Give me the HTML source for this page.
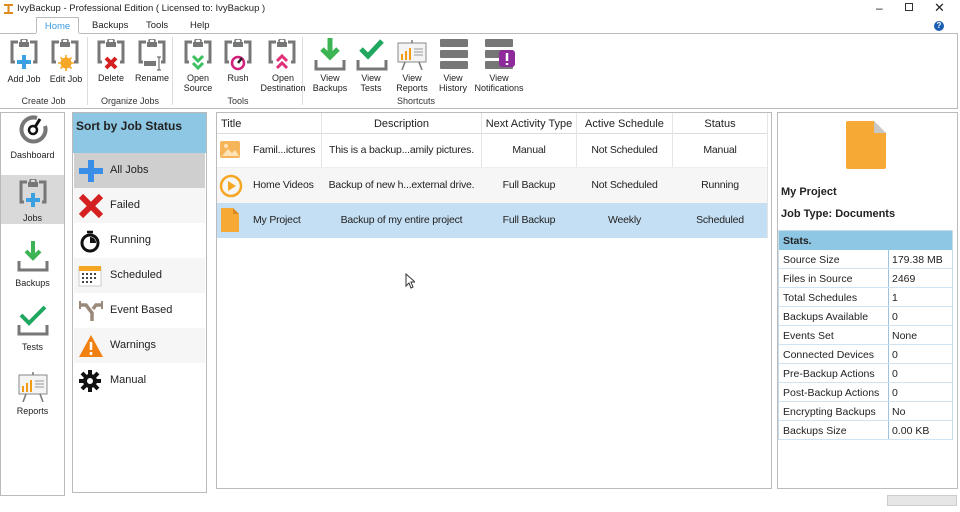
<!DOCTYPE html>
<html><head><meta charset="utf-8"><style>
*{margin:0;padding:0;box-sizing:border-box}
body{width:960px;height:512px;background:#fff;font-family:"Liberation Sans",sans-serif;font-size:11px;color:#222;position:relative;overflow:hidden;white-space:nowrap}
.a{position:absolute}
.lbl{position:absolute;text-align:center;font-size:9px;line-height:10px;color:#222}
.grp{position:absolute;top:96px;font-size:9px;color:#333;text-align:center}
.sep{position:absolute;top:37px;width:1px;height:68px;background:#ddd}
.cat{position:absolute;left:74px;width:131px;height:35px;font-size:11px}
.cat span{position:absolute;left:36px;top:11px}
.cat svg{position:absolute;left:4px;top:6px}
.row{position:absolute;left:217px;width:550px;height:35px;font-size:10.5px;letter-spacing:-0.2px}
.row div{position:absolute;top:11px;text-align:center}
.st{position:absolute;left:779px;width:173px;height:19px;border-bottom:1px solid #cfe3f2;font-size:10.5px}
.st b{font-weight:normal;position:absolute;left:4px;top:4px}
.st i{font-style:normal;position:absolute;left:113px;top:4px}
.nav{position:absolute;left:1px;width:63px;text-align:center;font-size:9px}
</style></head><body>
<svg width="0" height="0" style="position:absolute"><defs>
<g id="clip"><path d="M3 9V3h6M21 3h6v6" fill="none" stroke="#777" stroke-width="3"/><path d="M3 9v14h3M27 9v14h-3" fill="none" stroke="#777" stroke-width="3"/><rect x="10" y="3" width="10" height="5" fill="#777"/><rect x="12" y="0" width="6" height="4" rx="2" fill="none" stroke="#777" stroke-width="1.6"/></g>
</defs></svg>

<svg class="a" style="left:3px;top:3px" width="11" height="11"><rect x="0" y="0" width="11" height="11" fill="#fff"/><path d="M1 2h9M5.5 2v8M1 10h9" stroke="#e08a1e" stroke-width="2"/></svg>
<div class="a" style="left:17px;top:3px;font-size:9.5px">IvyBackup - Professional Edition ( Licensed to: IvyBackup )</div>
<div class="a" style="left:876px;top:1px;font-size:12px">&#8211;</div>
<div class="a" style="left:905px;top:3px;width:8px;height:8px;border:1px solid #333"></div>
<div class="a" style="left:934px;top:0px;font-size:13px">&#10005;</div>
<div class="a" style="left:36px;top:17px;width:43px;height:17px;border:1px solid #bbb;border-bottom:none;background:#fff;color:#3a9be0;font-size:9.5px;text-align:center;padding-top:3px">Home</div>
<div class="a" style="left:92px;top:20px;font-size:9.5px">Backups</div>
<div class="a" style="left:146px;top:20px;font-size:9.5px">Tools</div>
<div class="a" style="left:190px;top:20px;font-size:9.5px">Help</div>
<div class="a" style="left:934px;top:21px;width:10px;height:10px;border-radius:50%;background:#1a5fb4;color:#fff;font-size:8px;text-align:center;font-weight:bold;line-height:10px">?</div>
<div class="a" style="left:0;top:33px;width:958px;height:76px;border:1px solid #bbb;border-left:none"></div>
<div class="a" style="left:36px;top:33px;width:43px;height:1px;background:#fff"></div>
<div class="sep" style="left:87px"></div><div class="sep" style="left:172px"></div><div class="sep" style="left:302px"></div>

<svg class="a" style="left:9px;top:39px" width="30" height="32"><use href="#clip"/><path d="M15 16v14M8 23h14" stroke="#3aa0e0" stroke-width="4"/></svg>
<svg class="a" style="left:50px;top:39px" width="30" height="32"><use href="#clip"/><circle cx="16" cy="24" r="4" fill="none" stroke="#f5a623" stroke-width="3"/><path d="M16 16v16M8 24h16M10.5 18.5l11 11M21.5 18.5l-11 11" stroke="#f5a623" stroke-width="1.6"/></svg>
<svg class="a" style="left:96px;top:39px" width="30" height="32"><use href="#clip"/><path d="M10 19l10 10M20 19l-10 10" stroke="#d42020" stroke-width="4"/></svg>
<svg class="a" style="left:137px;top:39px" width="30" height="32"><use href="#clip"/><rect x="7" y="22" width="12" height="5" fill="#777"/><path d="M22 18v13M20 18h4M20 31h4" stroke="#555" stroke-width="1"/></svg>
<svg class="a" style="left:183px;top:39px" width="30" height="32"><use href="#clip"/><path d="M10 17l5 5 5-5M10 24l5 5 5-5" fill="none" stroke="#3cc060" stroke-width="3"/></svg>
<svg class="a" style="left:223px;top:39px" width="30" height="32"><use href="#clip"/><circle cx="15" cy="24" r="6" fill="none" stroke="#d0207a" stroke-width="2.5"/><path d="M15 24l4-5" stroke="#222" stroke-width="2.5"/></svg>
<svg class="a" style="left:267px;top:39px" width="30" height="32"><use href="#clip"/><path d="M10 22l5-5 5 5M10 29l5-5 5 5" fill="none" stroke="#e0307a" stroke-width="3"/></svg>
<svg class="a" style="left:314px;top:38px" width="32" height="34"><path d="M16 0v18M8 11l8 8 8-8" fill="none" stroke="#3cb454" stroke-width="5"/><path d="M2 22v9h28v-9" fill="none" stroke="#777" stroke-width="3"/></svg>
<svg class="a" style="left:356px;top:38px" width="32" height="34"><path d="M5 11l7 7 14-15" fill="none" stroke="#20a860" stroke-width="5"/><path d="M2 22v9h28v-9" fill="none" stroke="#777" stroke-width="3"/></svg>
<svg class="a" style="left:397px;top:40px" width="30" height="30"><rect x="1" y="3" width="28" height="19" fill="#f4f4f4" stroke="#888"/><rect x="4" y="14" width="2" height="6" fill="#f39c12"/><rect x="8" y="11" width="2" height="9" fill="#f39c12"/><rect x="12" y="8" width="2" height="12" fill="#f39c12"/><path d="M17 9h9M17 12h9M17 15h9" stroke="#999"/><path d="M8 22l-3 8M22 22l3 8M15 0v3" stroke="#777" stroke-width="1.5"/></svg>
<svg class="a" style="left:440px;top:39px" width="28" height="32"><rect x="0" y="0" width="28" height="8" rx="1" fill="#777"/><rect x="0" y="11" width="28" height="8" rx="1" fill="#777"/><rect x="0" y="22" width="28" height="8" rx="1" fill="#777"/></svg>
<svg class="a" style="left:485px;top:39px" width="30" height="32"><rect x="0" y="0" width="28" height="8" rx="1" fill="#777"/><rect x="0" y="11" width="28" height="8" rx="1" fill="#777"/><rect x="0" y="22" width="28" height="8" rx="1" fill="#777"/><rect x="14" y="11" width="16" height="17" rx="3" fill="#8e2a9a"/><path d="M22 14v8M22 24v2" stroke="#fff" stroke-width="2.5"/></svg>

<div class="lbl" style="left:4px;top:74px;width:40px">Add Job</div>
<div class="lbl" style="left:46px;top:74px;width:40px">Edit Job</div>
<div class="lbl" style="left:91px;top:73px;width:40px">Delete</div>
<div class="lbl" style="left:132px;top:73px;width:40px">Rename</div>
<div class="lbl" style="left:176px;top:73px;width:44px">Open<br>Source</div>
<div class="lbl" style="left:218px;top:73px;width:40px">Rush</div>
<div class="lbl" style="left:258px;top:73px;width:50px">Open<br>Destination</div>
<div class="lbl" style="left:307px;top:73px;width:46px">View<br>Backups</div>
<div class="lbl" style="left:351px;top:73px;width:40px">View<br>Tests</div>
<div class="lbl" style="left:392px;top:73px;width:40px">View<br>Reports</div>
<div class="lbl" style="left:433px;top:73px;width:40px">View<br>History</div>
<div class="lbl" style="left:470px;top:73px;width:58px">View<br>Notifications</div>
<div class="grp" style="left:0;width:87px">Create Job</div>
<div class="grp" style="left:88px;width:84px">Organize Jobs</div>
<div class="grp" style="left:173px;width:130px">Tools</div>
<div class="grp" style="left:303px;width:226px">Shortcuts</div>

<div class="a" style="left:0;top:112px;width:65px;height:384px;border:1px solid #bbb"></div>
<svg class="a" style="left:17px;top:114px" width="32" height="32"><path d="M20 4A12 12 0 1 0 28 12" fill="none" stroke="#777" stroke-width="4"/><circle cx="16" cy="16" r="4" fill="none" stroke="#111" stroke-width="2.5"/><path d="M18 13l5-8" stroke="#111" stroke-width="3"/></svg>
<div class="nav" style="top:150px">Dashboard</div>
<div class="a" style="left:1px;top:175px;width:63px;height:49px;background:#d9d9d9"></div>
<svg class="a" style="left:18px;top:179px" width="30" height="32"><use href="#clip"/><path d="M15 14v14M8 21h14" stroke="#3aa0e0" stroke-width="4"/></svg>
<div class="nav" style="top:213px">Jobs</div>
<svg class="a" style="left:17px;top:241px" width="32" height="32"><path d="M16 0v16M9 10l7 7 7-7" fill="none" stroke="#3cb454" stroke-width="4"/><path d="M2 20v9h28v-9" fill="none" stroke="#777" stroke-width="3"/></svg>
<div class="nav" style="top:278px">Backups</div>
<svg class="a" style="left:17px;top:305px" width="32" height="32"><path d="M4 10l8 8 16-16" fill="none" stroke="#20a860" stroke-width="4"/><path d="M2 20v9h28v-9" fill="none" stroke="#777" stroke-width="3"/></svg>
<div class="nav" style="top:342px">Tests</div>
<svg class="a" style="left:18px;top:372px" width="30" height="30"><rect x="1" y="3" width="28" height="19" fill="#f4f4f4" stroke="#888"/><rect x="4" y="14" width="2" height="6" fill="#f39c12"/><rect x="8" y="11" width="2" height="9" fill="#f39c12"/><rect x="12" y="8" width="2" height="12" fill="#f39c12"/><path d="M17 9h9M17 12h9M17 15h9" stroke="#999"/><path d="M8 22l-3 8M22 22l3 8M15 0v3" stroke="#777" stroke-width="1.5"/></svg>
<div class="nav" style="top:406px">Reports</div>

<div class="a" style="left:72px;top:112px;width:135px;height:381px;border:1px solid #bbb"></div>
<div class="a" style="left:73px;top:113px;width:133px;height:40px;background:#8ec7e4;font-weight:bold;font-size:12px;padding:6px 3px">Sort by Job Status</div>
<div class="cat" style="top:153px;background:#cfcfcf"><svg width="26" height="24"><path d="M13 1v22M1 12h24" stroke="#3a8ee8" stroke-width="6"/></svg><span>All Jobs</span></div>
<div class="cat" style="top:188px;background:#f6f6f6"><svg width="26" height="24"><path d="M3 2l20 20M23 2L3 22" stroke="#d42020" stroke-width="6"/></svg><span>Failed</span></div>
<div class="cat" style="top:223px"><svg width="26" height="24"><circle cx="12" cy="14" r="8" fill="none" stroke="#111" stroke-width="3"/><path d="M12 14V8A6 6 0 0 1 18 14z" fill="#111"/><path d="M9 3h6" stroke="#111" stroke-width="2.5"/></svg><span>Running</span></div>
<div class="cat" style="top:258px;background:#f6f6f6"><svg width="26" height="24"><rect x="1" y="3" width="22" height="19" fill="#fff" stroke="#ccc"/><rect x="1" y="2" width="22" height="5" fill="#f5a623"/><path d="M4 10h2M8 10h2M12 10h2M16 10h2M4 14h2M8 14h2M12 14h2M16 14h2M4 18h2M8 18h2M12 18h2" stroke="#444" stroke-width="2"/></svg><span>Scheduled</span></div>
<div class="cat" style="top:293px"><svg width="26" height="24"><path d="M2 6h6l6 8v8M24 6h-6l-3 4" fill="none" stroke="#9a8878" stroke-width="3.5"/><path d="M2 2v8M24 2v8" stroke="#9a8878" stroke-width="2"/></svg><span>Event Based</span></div>
<div class="cat" style="top:328px;background:#f6f6f6"><svg width="26" height="24"><path d="M13 1L25 23H1z" fill="#f08010"/><path d="M13 8v8M13 18v3" stroke="#fff" stroke-width="2.5"/></svg><span>Warnings</span></div>
<div class="cat" style="top:363px"><svg width="26" height="24"><circle cx="12" cy="12" r="7" fill="#111"/><path d="M12 1v22M1 12h22M4 4l16 16M20 4L4 20" stroke="#111" stroke-width="4"/><circle cx="12" cy="12" r="3" fill="#fff"/></svg><span>Manual</span></div>

<div class="a" style="left:216px;top:112px;width:556px;height:377px;border:1px solid #bbb"></div>
<div class="a" style="left:217px;top:113px;width:550px;height:21px;border-bottom:1px solid #ddd"></div>
<div class="a" style="left:321px;top:113px;width:1px;height:125px;background:#e4e4e4"></div>
<div class="a" style="left:481px;top:113px;width:1px;height:125px;background:#e4e4e4"></div>
<div class="a" style="left:576px;top:113px;width:1px;height:125px;background:#e4e4e4"></div>
<div class="a" style="left:672px;top:113px;width:1px;height:125px;background:#e4e4e4"></div>
<div class="a" style="left:767px;top:113px;width:1px;height:125px;background:#e4e4e4"></div>
<div class="a" style="left:221px;top:118px">Title</div>
<div class="a" style="left:322px;top:118px;width:159px;text-align:center">Description</div>
<div class="a" style="left:482px;top:118px;width:94px;text-align:center">Next Activity Type</div>
<div class="a" style="left:577px;top:118px;width:95px;text-align:center">Active Schedule</div>
<div class="a" style="left:673px;top:118px;width:94px;text-align:center">Status</div>
<div class="row" style="top:133px;border-bottom:1px solid #eee"><svg class="a" style="left:3px;top:8px" width="20" height="18"><rect width="20" height="17" rx="2" fill="#f7b55a"/><path d="M2 15l6-7 4 4 3-3 4 6z" fill="#fde3b8"/><circle cx="6" cy="5" r="2" fill="#fde3b8"/></svg><div style="left:36px">Famil...ictures</div><div style="left:105px;width:159px">This is a backup...amily pictures.</div><div style="left:265px;width:94px">Manual</div><div style="left:360px;width:95px">Not Scheduled</div><div style="left:456px;width:94px">Manual</div></div>
<div class="row" style="top:168px;background:#f6f6f6"><svg class="a" style="left:2px;top:6px" width="24" height="24"><circle cx="12" cy="12" r="10" fill="none" stroke="#f5a623" stroke-width="2.5"/><path d="M9 7l8 5-8 5z" fill="#f5a623"/></svg><div style="left:36px">Home Videos</div><div style="left:105px;width:159px">Backup of new h...external drive.</div><div style="left:265px;width:94px">Full Backup</div><div style="left:360px;width:95px">Not Scheduled</div><div style="left:456px;width:94px">Running</div></div>
<div class="row" style="top:203px;background:#c4dff3;height:35px;width:550px"><svg class="a" style="left:4px;top:5px" width="18" height="24"><path d="M0 0h12l6 6v18H0z" fill="#f7a935"/><path d="M12 0v6h6" fill="#d88a20"/></svg><div style="left:36px">My Project</div><div style="left:105px;width:159px">Backup of my entire project</div><div style="left:265px;width:94px">Full Backup</div><div style="left:360px;width:95px">Weekly</div><div style="left:456px;width:94px">Scheduled</div></div>
<svg class="a" style="left:405px;top:273px" width="10" height="16"><path d="M1 1v12l3-3 2 5 2-1-2-5h4z" fill="#fff" stroke="#333" stroke-width="1"/></svg>

<div class="a" style="left:777px;top:112px;width:181px;height:377px;border:1px solid #bbb"></div>
<svg class="a" style="left:846px;top:121px" width="40" height="48"><path d="M2 0h26l12 12v34a2 2 0 0 1-2 2H2a2 2 0 0 1-2-2V2a2 2 0 0 1 2-2z" fill="#f7a935"/><path d="M28 0v12h12z" fill="#c8c8c8"/></svg>
<div class="a" style="left:781px;top:186px;font-weight:bold;font-size:11px">My Project</div>
<div class="a" style="left:781px;top:208px;font-weight:bold;font-size:11px">Job Type: Documents</div>
<div class="a" style="left:778px;top:230px;width:175px;height:210px;border:1px solid #c8dcea"></div>
<div class="a" style="left:779px;top:231px;width:173px;height:19px;background:#8ec7e4;font-weight:bold;font-size:10.5px;padding:4px 4px">Stats.</div>
<div class="a" style="left:888px;top:250px;width:1px;height:190px;background:#9cc4e0"></div>
<div class="st" style="top:250px"><b>Source Size</b><i>179.38 MB</i></div>
<div class="st" style="top:269px"><b>Files in Source</b><i>2469</i></div>
<div class="st" style="top:288px"><b>Total Schedules</b><i>1</i></div>
<div class="st" style="top:307px"><b>Backups Available</b><i>0</i></div>
<div class="st" style="top:326px"><b>Events Set</b><i>None</i></div>
<div class="st" style="top:345px"><b>Connected Devices</b><i>0</i></div>
<div class="st" style="top:364px"><b>Pre-Backup Actions</b><i>0</i></div>
<div class="st" style="top:383px"><b>Post-Backup Actions</b><i>0</i></div>
<div class="st" style="top:402px"><b>Encrypting Backups</b><i>No</i></div>
<div class="st" style="top:421px"><b>Backups Size</b><i>0.00 KB</i></div>
<div class="a" style="left:887px;top:495px;width:70px;height:11px;background:#e6e6e6;border:1px solid #ccc"></div>
</body></html>
